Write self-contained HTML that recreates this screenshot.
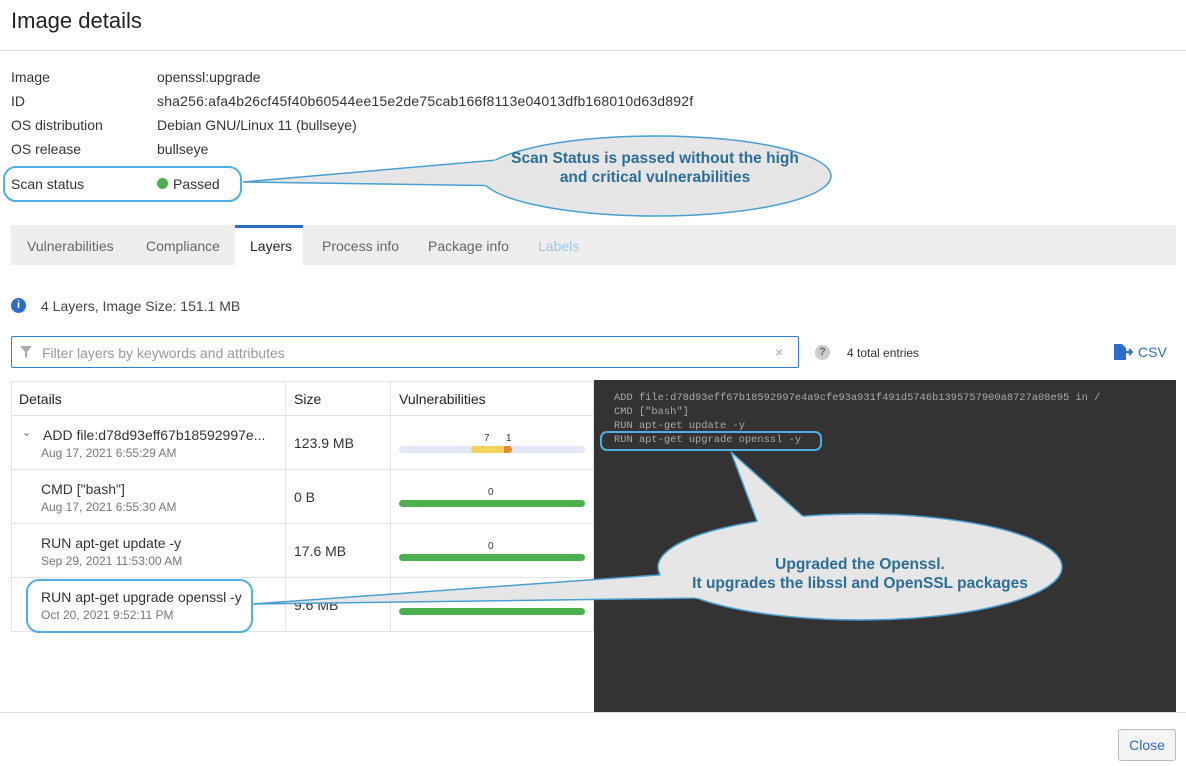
<!DOCTYPE html>
<html><head><meta charset="utf-8"><style>
body{margin:0;width:1186px;height:766px;position:relative;overflow:hidden;background:#fff;font-family:"Liberation Sans",sans-serif;color:#333;font-size:14px}
.a{position:absolute;white-space:nowrap}
.code{font-family:"Liberation Mono",monospace;font-size:10.4px;color:#aaa}
.bar{position:absolute;height:7px;border-radius:4px;left:399px;width:186px}
</style></head><body>
<div class="a" style="left:11px;top:8px;font-size:22px;color:#222">Image details</div>
<div class="a" style="left:0;top:50px;width:1186px;border-top:1px solid #ddd"></div>
<div class="a" style="left:11px;top:69px">Image</div><div class="a" style="left:157px;top:69px">openssl:upgrade</div>
<div class="a" style="left:11px;top:93px">ID</div><div class="a" style="left:157px;top:93px;letter-spacing:0.2px">sha256:afa4b26cf45f40b60544ee15e2de75cab166f8113e04013dfb168010d63d892f</div>
<div class="a" style="left:11px;top:117px">OS distribution</div><div class="a" style="left:157px;top:117px">Debian GNU/Linux 11 (bullseye)</div>
<div class="a" style="left:11px;top:141px">OS release</div><div class="a" style="left:157px;top:141px">bullseye</div>
<div class="a" style="left:11px;top:176px">Scan status</div>
<div class="a" style="left:157px;top:178px;width:11px;height:11px;border-radius:50%;background:#4caf50"></div>
<div class="a" style="left:173px;top:176px">Passed</div>

<div class="a" style="left:11px;top:225px;width:1165px;height:40px;background:#eee"></div>
<div class="a" style="left:235px;top:225px;width:68px;height:40px;background:#fff;border-top:3px solid #2f6bc9;box-sizing:border-box"></div>
<div class="a" style="left:27px;top:238px;color:#666">Vulnerabilities</div>
<div class="a" style="left:146px;top:238px;color:#666">Compliance</div>
<div class="a" style="left:250px;top:238px;color:#222">Layers</div>
<div class="a" style="left:322px;top:238px;color:#666">Process info</div>
<div class="a" style="left:428px;top:238px;color:#666">Package info</div>
<div class="a" style="left:538px;top:238px;color:#9cc8f0">Labels</div>

<div class="a" style="left:11px;top:298px;width:15px;height:15px;border-radius:50%;background:#2f6bc9;color:#fff;font-size:11px;font-weight:bold;text-align:center;line-height:15px">i</div>
<div class="a" style="left:41px;top:298px;color:#444">4 Layers, Image Size: 151.1 MB</div>

<div class="a" style="left:11px;top:336px;width:788px;height:32px;border:1px solid #2f7fd0;border-radius:2px;box-sizing:border-box"></div>
<svg class="a" style="left:20px;top:346px" width="12" height="12"><path d="M0 0H12L7 6V12L5 11V6Z" fill="#aaa"/></svg>
<div class="a" style="left:42px;top:345px;color:#999">Filter layers by keywords and attributes</div>
<div class="a" style="left:775px;top:344px;color:#aaa;font-size:14px">×</div>
<div class="a" style="left:815px;top:345px;width:15px;height:15px;border-radius:50%;background:#ccc;color:#666;font-size:11px;font-weight:bold;text-align:center;line-height:15px">?</div>
<div class="a" style="left:847px;top:346px;font-size:12px">4 total entries</div>
<svg class="a" style="left:1114px;top:344px" width="20" height="16"><path d="M0 0H8L12 4V16H0Z" fill="#2f6bc9"/><path d="M11 8H17M15 5L18 8L15 11" stroke="#2f6bc9" stroke-width="2" fill="none"/></svg>
<div class="a" style="left:1138px;top:344px;color:#2f6bc9">CSV</div>

<div class="a" style="left:11px;top:381px;width:583px;height:251px;border:1px solid #e3e3e3;box-sizing:border-box"></div>
<div class="a" style="left:11px;top:415px;width:583px;border-top:1px solid #e3e3e3"></div>
<div class="a" style="left:11px;top:469px;width:583px;border-top:1px solid #e3e3e3"></div>
<div class="a" style="left:11px;top:523px;width:583px;border-top:1px solid #e3e3e3"></div>
<div class="a" style="left:11px;top:577px;width:583px;border-top:1px solid #e3e3e3"></div>
<div class="a" style="left:285px;top:381px;height:251px;border-left:1px solid #e3e3e3"></div>
<div class="a" style="left:390px;top:381px;height:251px;border-left:1px solid #e3e3e3"></div>
<div class="a" style="left:19px;top:391px;color:#222">Details</div>
<div class="a" style="left:294px;top:391px;color:#222">Size</div>
<div class="a" style="left:399px;top:391px;color:#222">Vulnerabilities</div>

<div class="a" style="left:22px;top:426px;font-size:11px;color:#666">⌄</div>
<div class="a" style="left:43px;top:427px">ADD file:d78d93eff67b18592997e...</div>
<div class="a" style="left:41px;top:446px;font-size:12px;color:#777">Aug 17, 2021 6:55:29 AM</div>
<div class="a" style="left:294px;top:435px">123.9 MB</div>
<div class="a" style="left:484px;top:433px;font-size:10px">7</div><div class="a" style="left:506px;top:433px;font-size:10px">1</div>
<div class="bar" style="top:446px;background:#e4e7f7"></div>
<div class="a" style="left:471px;top:446px;width:33px;height:7px;background:#f5d35a;border-radius:4px 0 0 4px"></div>
<div class="a" style="left:504px;top:446px;width:8px;height:7px;background:#e08d2d;border-radius:0 4px 4px 0"></div>

<div class="a" style="left:41px;top:481px">CMD ["bash"]</div>
<div class="a" style="left:41px;top:500px;font-size:12px;color:#777">Aug 17, 2021 6:55:30 AM</div>
<div class="a" style="left:294px;top:489px">0 B</div>
<div class="a" style="left:488px;top:487px;font-size:10px">0</div>
<div class="bar" style="top:500px;background:#4caf50"></div>

<div class="a" style="left:41px;top:535px">RUN apt-get update -y</div>
<div class="a" style="left:41px;top:554px;font-size:12px;color:#777">Sep 29, 2021 11:53:00 AM</div>
<div class="a" style="left:294px;top:543px">17.6 MB</div>
<div class="a" style="left:488px;top:541px;font-size:10px">0</div>
<div class="bar" style="top:554px;background:#4caf50"></div>

<div class="a" style="left:41px;top:589px">RUN apt-get upgrade openssl -y</div>
<div class="a" style="left:41px;top:608px;font-size:12px;color:#777">Oct 20, 2021 9:52:11 PM</div>
<div class="a" style="left:294px;top:597px">9.6 MB</div>
<div class="bar" style="top:608px;background:#4caf50"></div>

<div class="a" style="left:594px;top:380px;width:582px;height:332px;background:#333"></div>
<div class="a code" style="left:614px;top:392px">ADD file:d78d93eff67b18592997e4a9cfe93a931f491d5746b1395757900a8727a08e95 in /</div>
<div class="a code" style="left:614px;top:406px">CMD ["bash"]</div>
<div class="a code" style="left:614px;top:420px">RUN apt-get update -y</div>
<div class="a code" style="left:614px;top:434px">RUN apt-get upgrade openssl -y</div>

<div class="a" style="left:0;top:712px;width:1186px;border-top:1px solid #ddd"></div>
<div class="a" style="left:1118px;top:729px;width:58px;height:32px;border:1px solid #bbb;border-radius:3px;background:#f4f4f4;box-sizing:border-box;text-align:center;line-height:30px;color:#2f6bc9">Close</div>

<svg class="a" style="left:0;top:0" width="1186" height="766">
<defs>
<mask id="m1"><rect width="1186" height="766" fill="#fff"/><ellipse cx="656" cy="176" rx="175" ry="40" fill="#000"/></mask>
<mask id="m2"><rect width="1186" height="766" fill="#fff"/><ellipse cx="860" cy="567" rx="202" ry="53" fill="#000"/></mask>
</defs>
<g fill="none" stroke="#4fb0e0" stroke-width="2">
<rect x="4" y="167" width="237" height="34" rx="12"/>
<rect x="27" y="580" width="225" height="52" rx="12"/>
<rect x="601" y="432" width="220" height="18" rx="6"/>
</g>
<g stroke="#4a9fd0" stroke-width="1.5" fill="#e6e6e6">
<ellipse cx="656" cy="176" rx="175" ry="40"/>
<ellipse cx="860" cy="567" rx="202" ry="53"/>
</g>
<g fill="#e6e6e6" stroke="none">
<path d="M520 158 L243 182 L520 186 Z"/>
<path d="M700 572 L253 604 L700 598 Z"/>
<path d="M766 545 L731 452 L835 545 Z"/>
</g>
<g stroke="#4a9fd0" stroke-width="1.5" fill="none">
<path d="M520 158 L243 182 L520 186" mask="url(#m1)"/>
<path d="M700 572 L253 604 L700 598" mask="url(#m2)"/>
<path d="M766 545 L731 452 L835 545" mask="url(#m2)"/>
</g>
<g font-family="Liberation Sans,sans-serif" font-weight="bold" font-size="15.5" fill="#2c6e96" text-anchor="middle">
<text x="655" y="163">Scan Status is passed without the high</text>
<text x="655" y="182">and critical vulnerabilities</text>
<text x="860" y="569">Upgraded the Openssl.</text>
<text x="860" y="588">It upgrades the libssl and OpenSSL packages</text>
</g>
</svg>
</body></html>
